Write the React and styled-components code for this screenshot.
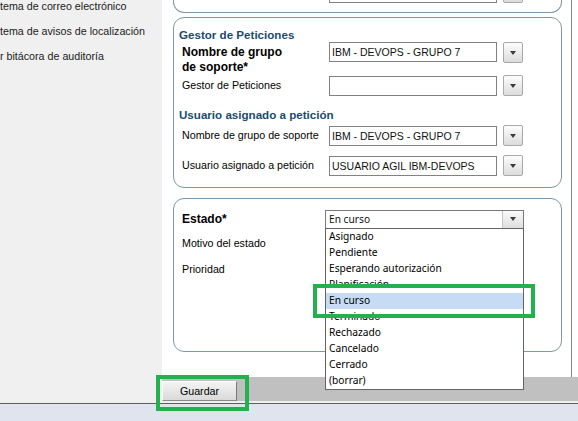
import styled, { createGlobalStyle } from 'styled-components';

const GREEN = '#22b14c';

const GlobalStyle = createGlobalStyle`
  html, body { margin: 0; padding: 0; }
  body {
    width: 578px;
    height: 421px;
    overflow: hidden;
    background: #fff;
    font-family: "Liberation Sans", Arial, sans-serif;
    color: #111;
  }
  * { box-sizing: border-box; }
`;

const Screen = styled.div`
  width: 578px;
  height: 421px;
  display: flex;
  flex-direction: column;
  overflow: hidden;
`;

const Workspace = styled.div`
  display: flex;
  height: 403px;
  flex: none;
`;

const Sidebar = styled.nav`
  width: 162px;
  flex: none;
  background: #f0f0f0;
  overflow: hidden;
`;

const NavItem = styled.div`
  height: 13px;
  line-height: 13px;
  margin-bottom: 12px;
  font-size: 10.7px;
  color: #1a1a1a;
  white-space: nowrap;
`;

const RightColumn = styled.div`
  flex: 1;
  display: flex;
  flex-direction: column;
  background: #f0f0f0;
`;

const Main = styled.main`
  height: 377px;
  display: flex;
  background: #fff;
`;

const Content = styled.div`
  width: 410px;
  border-right: 1px solid #858585;
  padding: 0 9px 0 11px;
  display: flex;
  flex-direction: column;
`;

const Panel = styled.section`
  flex: none;
  height: ${({ $h }) => $h}px;
  margin-top: ${({ $top }) => $top || 0}px;
  border: 1px solid #7c99b0;
  border-radius: 11px;
  background: #fff;
  padding: 10px 0 0 5px;
  display: flex;
  flex-direction: column;
`;

const CutPanel = styled(Panel)`
  border-top: none;
  border-radius: 0 0 11px 11px;
  padding: 0 0 9px 5px;
  justify-content: flex-end;
  overflow: hidden;
`;

const Heading = styled.h3`
  margin: ${({ $top }) => $top || 0}px 0 0;
  height: 14px;
  line-height: 13px;
  font-size: 11.6px;
  font-weight: bold;
  color: #1b4c6f;
`;

const Row = styled.div`
  flex: none;
  display: flex;
  align-items: ${({ $tall }) => ($tall ? 'flex-start' : 'center')};
  margin: ${({ $top }) => $top || 0}px 0 0 3px;
  min-height: ${({ $tall }) => ($tall ? 33 : 20)}px;
`;

const Label = styled.div`
  width: 147px;
  flex: none;
  font-size: ${({ $bold }) => ($bold ? '12px' : '10.7px')};
  font-weight: ${({ $bold }) => ($bold ? 'bold' : 'normal')};
  line-height: ${({ $tall }) => ($tall ? '14.5px' : '13px')};
  padding-top: ${({ $tall }) => ($tall ? 3 : 0)}px;
  color: #000;
`;

const Field = styled.div`
  width: 168px;
  height: 20px;
  flex: none;
  border: 1px solid #828282;
  background: #fff;
  padding-left: 2px;
  font-size: 10.5px;
  line-height: 18px;
  white-space: nowrap;
  overflow: hidden;
`;

const Triangle = styled.span`
  width: 0;
  height: 0;
  border-left: 3.5px solid transparent;
  border-right: 3.5px solid transparent;
  border-top: 4px solid #3c3c3c;
`;

const DropButton = styled.div`
  width: 20px;
  height: 21px;
  margin-left: 6px;
  flex: none;
  border: 1px solid #a9a9a9;
  border-radius: 2px;
  background: linear-gradient(#fdfdfd, #dcdcdc);
  display: flex;
  align-items: center;
  justify-content: center;
`;

const Combo = styled.div`
  position: relative;
  width: 199px;
  height: 19px;
  margin-left: -4px;
  flex: none;
  border: 1px solid #7a7a7a;
  background: #fff;
  display: flex;
  font-family: "Noto Sans", "Open Sans", sans-serif;
  font-size: 10.2px;
`;

const ComboText = styled.div`
  flex: 1;
  padding-left: 3px;
  line-height: 16px;
`;

const ComboArrow = styled.div`
  width: 21px;
  margin: 0;
  background: linear-gradient(#fafafa, #dedede);
  border-left: 1px solid #c4c4c4;
  display: flex;
  align-items: center;
  justify-content: center;
`;

const OptionList = styled.ul`
  position: absolute;
  z-index: 10;
  top: 100%;
  left: -1px;
  width: 199px;
  margin: 0;
  padding: 0;
  list-style: none;
  border: 1px solid #646464;
  background: #fff;
`;

const Option = styled.li`
  position: relative;
  height: 16px;
  line-height: 15px;
  padding-left: 3px;
  color: #000;
  background: ${({ $selected }) => ($selected ? '#c5dcf4' : 'transparent')};
`;

const Annotation = styled.span`
  position: absolute;
  z-index: 20;
  inset: ${({ $inset }) => $inset};
  border: 4px solid ${GREEN};
  pointer-events: none;
`;

const Filler = styled.div`
  flex: 1;
  background: #fff;
`;

const ActionBar = styled.div`
  height: 24px;
  flex: none;
  background: #c0c0c0;
  padding-top: 4px;
  display: flex;
`;

const ButtonWrap = styled.div`
  position: relative;
`;

const SaveButton = styled.button`
  width: 75px;
  height: 20px;
  border: 1px solid;
  border-color: #fafafa #7a7a7a #8a8a8a #fafafa;
  background: linear-gradient(#f4f4f4, #d9d9d9);
  font-family: "Liberation Sans", Arial, sans-serif;
  font-size: 10.7px;
  color: #000;
  padding: 0;
`;

const StatusBar = styled.footer`
  flex: 1;
  border-top: 1px solid #5e5e5e;
  background: #dfe4ee;
`;

const estados = [
  'Asignado',
  'Pendiente',
  'Esperando autorización',
  'Planificación',
  'En curso',
  'Terminado',
  'Rechazado',
  'Cancelado',
  'Cerrado',
  '(borrar)',
];

const SelectField = ({ value = '', top, label, bold, tall }) => (
  <Row $top={top} $tall={tall}>
    <Label $bold={bold} $tall={tall}>
      {label}
    </Label>
    <Field>{value}</Field>
    <DropButton>
      <Triangle />
    </DropButton>
  </Row>
);

const App = () => {
  return (
    <>
      <GlobalStyle />
      <Screen>
        <Workspace>
          <Sidebar>
            <NavItem>tema de correo electrónico</NavItem>
            <NavItem>tema de avisos de localización</NavItem>
            <NavItem>r bitácora de auditoría</NavItem>
          </Sidebar>

          <RightColumn>
            <Main>
              <Content>
                <CutPanel $h={13}>
                  <Row>
                    <Label />
                    <Field />
                    <DropButton>
                      <Triangle />
                    </DropButton>
                  </Row>
                </CutPanel>

                <Panel $h={171} $top={4}>
                  <Heading>Gestor de Peticiones</Heading>
                  <SelectField
                    tall
                    bold
                    label={
                      <>
                        Nombre de grupo
                        <br />
                        de soporte*
                      </>
                    }
                    value="IBM - DEVOPS - GRUPO 7"
                  />
                  <SelectField label="Gestor de Peticiones" />

                  <Heading $top={12}>Usuario asignado a petición</Heading>
                  <SelectField
                    top={3}
                    label="Nombre de grupo de soporte"
                    value="IBM - DEVOPS - GRUPO 7"
                  />
                  <SelectField
                    top={9}
                    label="Usuario asignado a petición"
                    value="USUARIO AGIL IBM-DEVOPS"
                  />
                </Panel>

                <Panel $h={154} $top={10}>
                  <Row>
                    <Label $bold>Estado*</Label>
                    <Combo>
                      <ComboText>En curso</ComboText>
                      <ComboArrow>
                        <Triangle />
                      </ComboArrow>
                      <OptionList>
                        {estados.map((estado) => (
                          <Option key={estado} $selected={estado === 'En curso'}>
                            {estado}
                            {estado === 'En curso' && (
                              <Annotation $inset="-9px -12px -9px -13px" />
                            )}
                          </Option>
                        ))}
                      </OptionList>
                    </Combo>
                  </Row>
                  <SelectField top={4} label="Motivo del estado" />
                  <SelectField top={5} label="Prioridad" />
                </Panel>
              </Content>
              <Filler />
            </Main>

            <ActionBar>
              <ButtonWrap>
                <SaveButton>Guardar</SaveButton>
                <Annotation $inset="-6px -12px -10px -6px" />
              </ButtonWrap>
            </ActionBar>
          </RightColumn>
        </Workspace>
        <StatusBar />
      </Screen>
    </>
  );
};

export default App;
